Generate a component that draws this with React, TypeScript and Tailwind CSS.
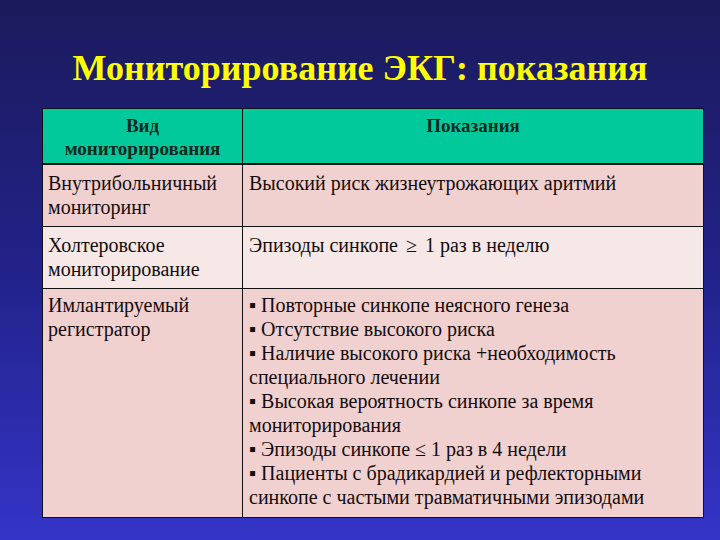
import React from 'react';

const implant = [
  ['▪ Повторные синкопе неясного генеза'],
  ['▪ Отсутствие высокого риска'],
  ['▪ Наличие высокого риска +необходимость', 'специального лечении'],
  ['▪ Высокая вероятность синкопе за время', 'мониторирования'],
  ['▪ Эпизоды синкопе ≤ 1 раз в 4 недели'],
  ['▪ Пациенты с брадикардией и рефлекторными', 'синкопе с частыми травматичными эпизодами'],
];

export default function App() {
  return (
    <div className="w-[720px] h-[540px] overflow-hidden bg-gradient-to-b from-[#1b1a5c] via-[#22228a] to-[#3434c8] text-black font-['Liberation_Serif']">
      <h1 className="h-[108px] pt-[46px] text-center text-[36px] leading-[44px] font-bold text-[#ffff00]">
        Мониторирование ЭКГ: показания
      </h1>

      <div className="ml-[42px] w-[662px] border border-[#111] text-[20px] leading-[24px] text-[#140c0c]">
        {/* header */}
        <div className="flex bg-[#02c99c] border-b-2 border-[#111] font-bold text-[19px] leading-[23px] text-[#0b2a1e]">
          <div className="w-[200px] shrink-0 border-r border-[#111] h-[54px] pt-[5px] text-center">
            Вид
            <br />
            мониторирования
          </div>
          <div className="flex-1 pt-[5px] text-center">Показания</div>
        </div>

        {/* row 1 */}
        <div className="flex bg-[#f0d1cf] border-b border-[#111] h-[62px]">
          <div className="w-[200px] shrink-0 border-r border-[#111] px-[5px] pt-[6px]">
            Внутрибольничный
            <br />
            мониторинг
          </div>
          <div className="flex-1 px-[6px] pt-[6px]">Высокий риск жизнеутрожающих аритмий</div>
        </div>

        {/* row 2 */}
        <div className="flex bg-[#f5e8e6] border-b border-[#111] h-[62px]">
          <div className="w-[200px] shrink-0 border-r border-[#111] px-[5px] pt-[6px]">
            Холтеровское
            <br />
            мониторирование
          </div>
          <div className="flex-1 px-[6px] pt-[6px]">
            Эпизоды синкопе <span className="mx-[3px]">≥</span> 1 раз в неделю
          </div>
        </div>

        {/* row 3 */}
        <div className="flex bg-[#f0d1cf] h-[228px]">
          <div className="w-[200px] shrink-0 border-r border-[#111] px-[5px] pt-[4px]">
            Имлантируемый
            <br />
            регистратор
          </div>
          <div className="flex-1 px-[6px] pt-[4px]">
            {implant.map((lines, i) => (
              <div key={i}>
                {lines.map((l, j) => (
                  <div key={j}>{l}</div>
                ))}
              </div>
            ))}
          </div>
        </div>
      </div>
    </div>
  );
}
